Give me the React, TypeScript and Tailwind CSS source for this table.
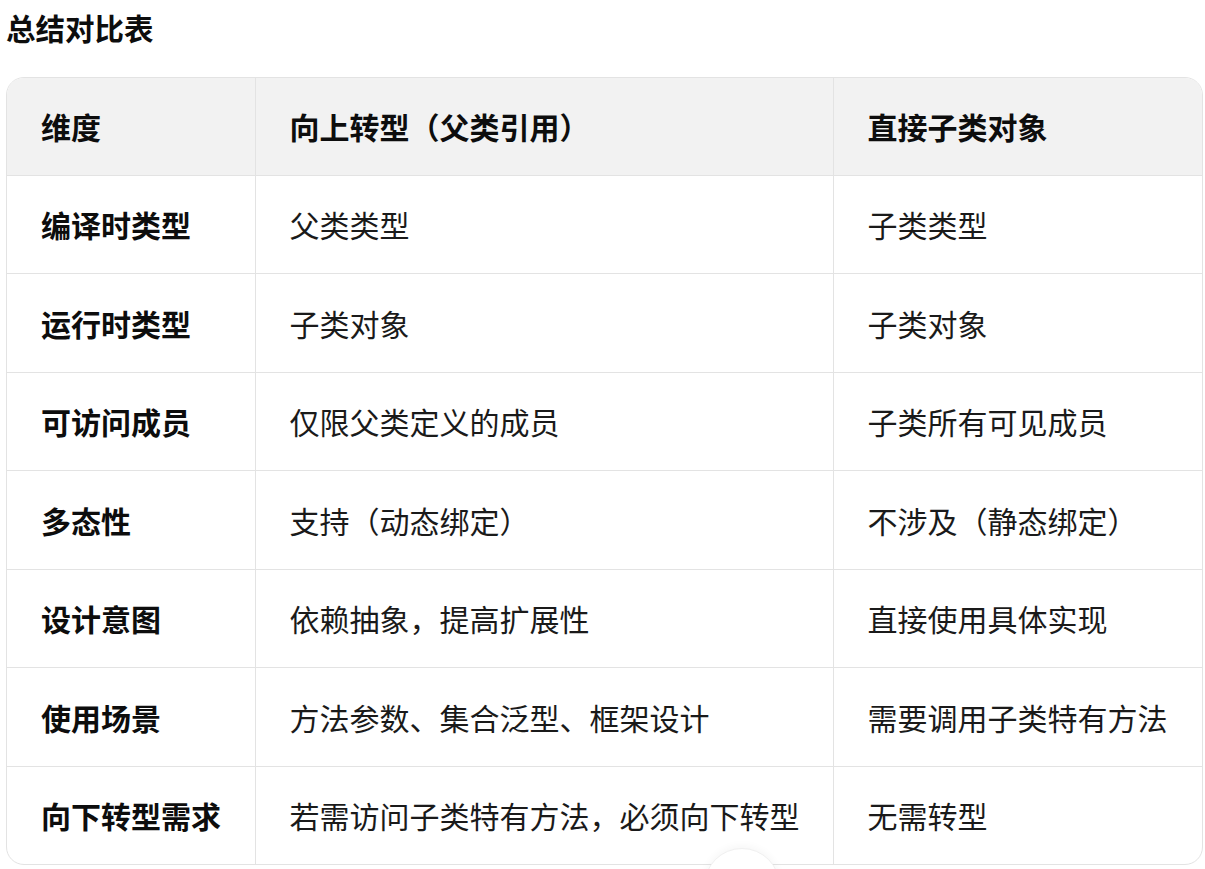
import React from 'react';

const rows: [string, string, string][] = [
  ['编译时类型', '父类类型', '子类类型'],
  ['运行时类型', '子类对象', '子类对象'],
  ['可访问成员', '仅限父类定义的成员', '子类所有可见成员'],
  ['多态性', '支持（动态绑定）', '不涉及（静态绑定）'],
  ['设计意图', '依赖抽象，提高扩展性', '直接使用具体实现'],
  ['使用场景', '方法参数、集合泛型、框架设计', '需要调用子类特有方法'],
  ['向下转型需求', '若需访问子类特有方法，必须向下转型', '无需转型'],
];

const font = { fontFamily: '"Noto Sans CJK SC", "Noto Sans", sans-serif' };

export default function App() {
  return (
    <div className="relative h-[869px] overflow-hidden bg-white pl-[6px] text-[#0d0d0d]" style={font}>
      <h2 className="pt-[7px] text-[29.5px] font-bold leading-[40px]">总结对比表</h2>
      <div className="mt-[30px] w-[1197px] overflow-hidden rounded-[18px] border border-[#e3e3e3]">
        <table className="w-full table-fixed border-collapse text-[30px] leading-[42px]">
          <colgroup>
            <col className="w-[248px]" />
            <col className="w-[578px]" />
            <col />
          </colgroup>
          <thead>
            <tr className="h-[97px] bg-[#f2f2f2]">
              <th className="border-r border-b border-[#e3e3e3] px-[34px] text-left font-bold">维度</th>
              <th className="border-r border-b border-[#e3e3e3] px-[34px] text-left font-bold">向上转型（父类引用）</th>
              <th className="border-b border-[#e3e3e3] px-[34px] text-left font-bold">直接子类对象</th>
            </tr>
          </thead>
          <tbody>
            {rows.map((r, i) => {
              const last = i === rows.length - 1;
              return (
                <tr key={i} className={last ? 'h-[98px]' : 'h-[98.5px] border-b border-[#e3e3e3]'}>
                  <td className="border-r border-[#e3e3e3] px-[34px] font-bold whitespace-nowrap">{r[0]}</td>
                  <td className="border-r border-[#e3e3e3] px-[34px] text-[#1a1a1a] whitespace-nowrap">{r[1]}</td>
                  <td className="px-[34px] text-[#1a1a1a] whitespace-nowrap">{r[2]}</td>
                </tr>
              );
            })}
          </tbody>
        </table>
      </div>
      <div className="absolute left-[704px] top-[848px] h-[76px] w-[76px] rounded-full border border-[#f0f0f0] bg-white shadow-[0_-2px_8px_rgba(0,0,0,0.04)]" />
    </div>
  );
}
